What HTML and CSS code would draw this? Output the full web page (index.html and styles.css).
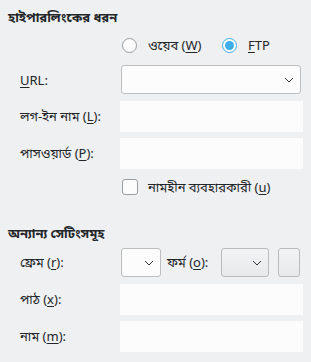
FILE: index.html
```html
<!DOCTYPE html>
<html lang="bn">
<head>
    <meta charset="UTF-8">
    <meta name="viewport" content="width=device-width, initial-scale=1.0">
    <title>হাইপারলিংক</title>
    <link rel="stylesheet" href="styles.css">
</head>
<body>
    <div class="section-title">হাইপারলিংকের ধরন</div>

    <div class="radio-row">
        <label class="choice web"><span class="radio"></span>ওয়েব (<u>W</u>)</label>
        <label class="choice"><span class="radio checked"></span><u>F</u>TP</label>
    </div>

    <div class="form-row first">
        <span class="label"><u>U</u>RL:</span>
        <div class="field">
            <div class="combo wide">
                <svg class="chevron" width="10" height="6" viewBox="0 0 10 6"><path d="M1 1 L5 5 L9 1" fill="none" stroke="#31363b" stroke-width="1"/></svg>
            </div>
        </div>
    </div>

    <div class="form-row">
        <span class="label">লগ-ইন নাম (<u>L</u>):</span>
        <div class="field"><div class="text-input"></div></div>
    </div>

    <div class="form-row">
        <span class="label">পাসওয়ার্ড (<u>P</u>):</span>
        <div class="field"><div class="text-input"></div></div>
    </div>

    <div class="check-row">
        <label class="choice"><span class="checkbox"></span>নামহীন ব্যবহারকারী (<u>u</u>)</label>
    </div>

    <div class="section-title second">অন্যান্য সেটিংসমূহ</div>

    <div class="form-row frame-row">
        <span class="label">ফ্রেম (<u>r</u>):</span>
        <div class="field inline">
            <div class="combo small">
                <svg class="chevron" width="10" height="6" viewBox="0 0 10 6"><path d="M1 1 L5 5 L9 1" fill="none" stroke="#31363b" stroke-width="1"/></svg>
            </div>
            <span class="inline-label">ফর্ম (<u>o</u>):</span>
            <div class="combo flat">
                <svg class="chevron" width="10" height="6" viewBox="0 0 10 6"><path d="M1 1 L5 5 L9 1" fill="none" stroke="#31363b" stroke-width="1"/></svg>
            </div>
            <div class="tool-button"></div>
        </div>
    </div>

    <div class="form-row">
        <span class="label">পাঠ (<u>x</u>):</span>
        <div class="field"><div class="text-input"></div></div>
    </div>

    <div class="form-row">
        <span class="label">নাম (<u>m</u>):</span>
        <div class="field"><div class="text-input"></div></div>
    </div>
</body>
</html>
```

FILE: styles.css
```css
body {
    font-family: "Noto Sans", "Noto Sans Bengali", sans-serif;
    font-size: 13px;
    color: #232629;
    background-color: #eff0f1;
    margin: 0;
    padding: 8px 8px 0 8px;
}

u {
    text-decoration-thickness: 1px;
    text-underline-offset: 2px;
}

.section-title {
    font-weight: bold;
    line-height: 18px;
    height: 18px;
}

.section-title.second {
    margin-top: 25px;
}

.radio-row {
    display: flex;
    align-items: center;
    height: 22px;
    margin-top: 8px;
    padding-left: 114px;
    gap: 17px;
}

.choice {
    display: flex;
    align-items: center;
    line-height: 18px;
    white-space: nowrap;
}

.choice.web {
    width: 83px;
}

.radio {
    flex: none;
    width: 13px;
    height: 13px;
    border: 1px solid #9a9c9e;
    border-radius: 50%;
    background-color: #fcfcfc;
    margin-right: 11px;
    position: relative;
}

.radio.checked {
    border-color: #3daee9;
}

.radio.checked::after {
    content: "";
    position: absolute;
    top: 2px;
    left: 2px;
    width: 9px;
    height: 9px;
    border-radius: 50%;
    background-color: #3daee9;
}

.form-row {
    display: flex;
    align-items: center;
    height: 31px;
    margin-top: 6px;
}

.form-row.first {
    margin-top: 8px;
}

.form-row.frame-row {
    margin-top: 5px;
}

.label {
    width: 100px;
    padding-left: 12px;
    white-space: nowrap;
}

.field {
    flex: 1;
    height: 31px;
    display: flex;
    align-items: center;
}

.field.inline {
    padding-left: 1px;
}

.text-input {
    width: 100%;
    height: 31px;
    background-color: #fcfcfc;
}

.combo {
    position: relative;
    height: 27px;
    border: 1px solid #bcbebf;
    border-radius: 3px;
    background-color: #fcfcfc;
}

.combo.wide {
    width: 178px;
    margin-left: 1px;
}

.combo.small {
    width: 38px;
}

.combo.flat {
    width: 46px;
    background: linear-gradient(#f2f3f4, #e8e9ea);
    border-color: #b9bbbc;
}

.chevron {
    position: absolute;
    right: 6px;
    top: 11px;
}

.inline-label {
    width: 45px;
    margin-left: 6px;
    margin-right: 9px;
    white-space: nowrap;
}

.tool-button {
    width: 20px;
    height: 27px;
    margin-left: 9px;
    border: 1px solid #b9bbbc;
    border-radius: 3px;
    background: linear-gradient(#f2f3f4, #e8e9ea);
}

.check-row {
    display: flex;
    align-items: center;
    height: 24px;
    margin-top: 6px;
    padding-left: 114px;
}

.checkbox {
    flex: none;
    width: 14px;
    height: 14px;
    border: 1px solid #9a9c9e;
    border-radius: 3px;
    background-color: #fcfcfc;
    margin-right: 10px;
}
```
